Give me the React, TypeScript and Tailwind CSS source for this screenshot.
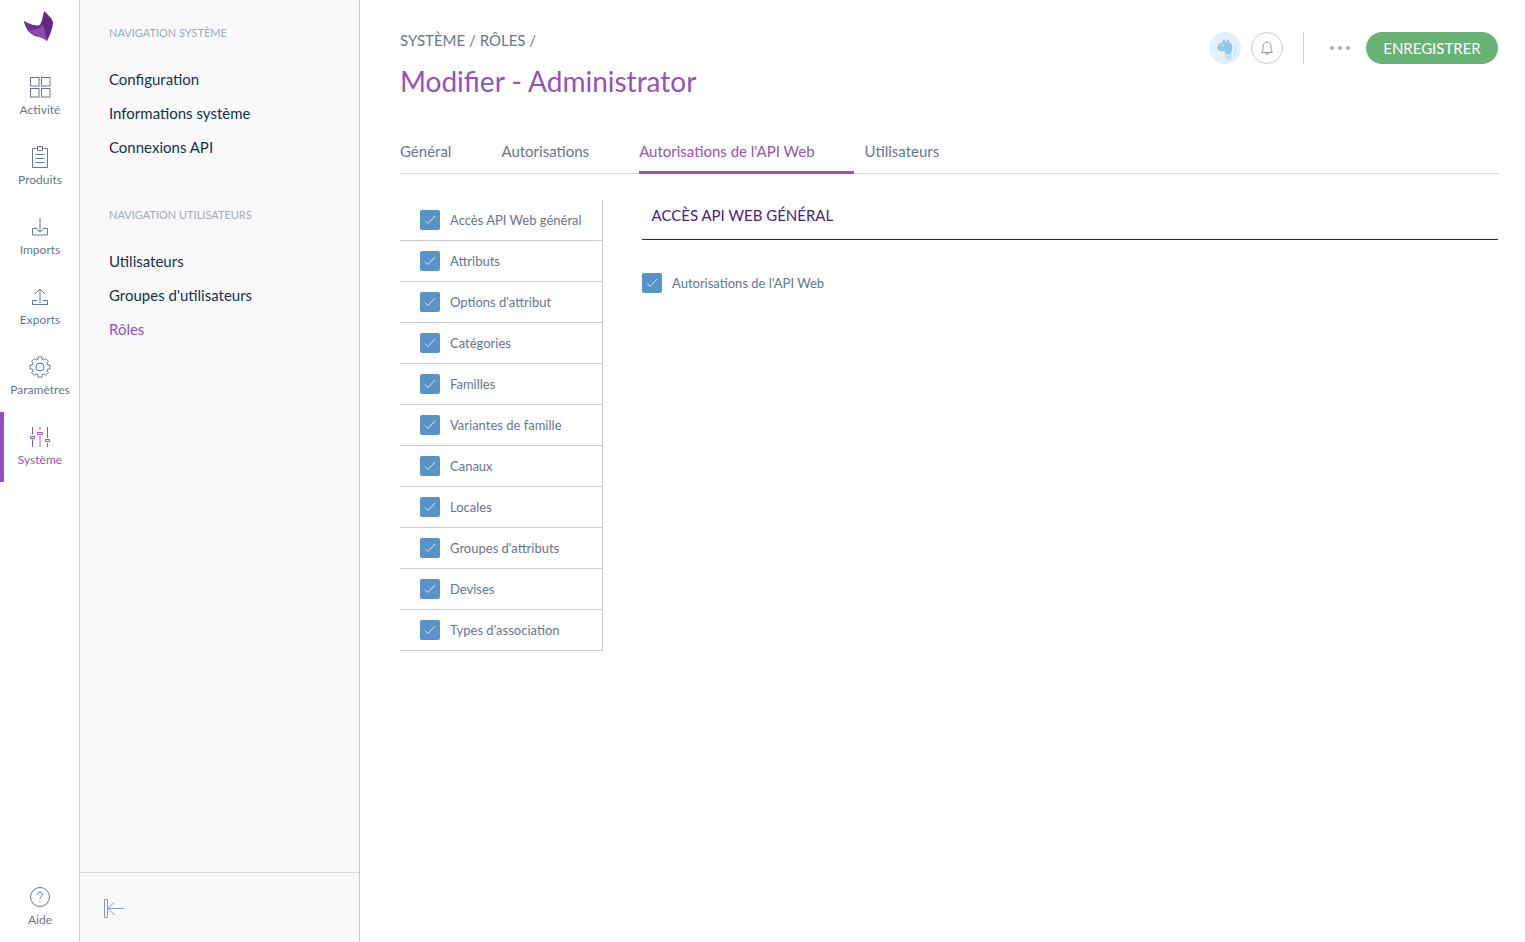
import type { ReactNode } from 'react';

// 8 tooth cog outline for the settings icon
const gearPath = Array.from({ length: 8 }, (_, i) => {
  const pt = (deg: number, r: number) => {
    const a = ((i * 45 + deg) * Math.PI) / 180;
    return `${(14 + r * Math.cos(a)).toFixed(2)} ${(14 + r * Math.sin(a)).toFixed(2)}`;
  };
  return `${i === 0 ? 'M' : 'L'}${pt(-11, 10.2)} L${pt(11, 10.2)} L${pt(15, 8)} L${pt(30, 8)}`;
}).join(' ') + 'Z';

const icons: Record<string, ReactNode> = {
  activity: (
    <>
      <rect x="4.5" y="4.5" width="8.5" height="8.5" />
      <rect x="15.5" y="4.5" width="8.5" height="8.5" />
      <rect x="4.5" y="15.5" width="8.5" height="8.5" />
      <rect x="15.5" y="15.5" width="8.5" height="8.5" />
    </>
  ),
  products: (
    <>
      <path d="M10.5 5.5H6.5V24.5H21.5V5.5H17.5" />
      <path d="M11.5 3.5H16.5V7.5H11.5Z" />
      <path d="M9.5 11.5H18.5M9.5 15.5H18.5M9.5 19.5H18.5" />
    </>
  ),
  imports: (
    <>
      <path d="M14 5V19M9 14.5L14 19L19 14.5" />
      <path d="M10 15.5H6.5V22H21.5V15.5H18" />
    </>
  ),
  exports: (
    <>
      <path d="M14 20V6M9 11L14 6L19 11" />
      <path d="M11 17.5H6.5V21.5H21.5V17.5H17" />
    </>
  ),
  settings: (
    <>
      <circle cx="14" cy="14" r="4" />
      <path d={gearPath} strokeLinejoin="round" />
    </>
  ),
  system: (
    <>
      <path d="M6.5 4V11.5M6.5 16.5V24" />
      <path d="M4.5 13.5H8.5V15.5H4.5Z" />
      <path d="M14 4V7M14 12.5V24" strokeOpacity="0.6" strokeWidth="1.5" />
      <path d="M11.5 9.5H16.5V11.5H11.5Z" />
      <path d="M21.5 4V15M21.5 20V24" />
      <path d="M19.5 16.5H23.5V18.5H19.5Z" />
    </>
  ),
};

function RailItem({ icon, label, active }: { icon: string; label: string; active?: boolean }) {
  return (
    <div
      className={`h-[70px] flex flex-col items-center pt-[11px] border-l-4 pr-[3px] ${
        active ? 'border-[#9452ba] text-[#9452ba]' : 'border-transparent text-[#67768a]'
      }`}
    >
      <svg width="28" height="28" viewBox="0 0 28 28" fill="none" stroke="currentColor" strokeWidth="1">
        {icons[icon]}
      </svg>
      <span className="text-[12px] leading-[16px] mt-[1px]">{label}</span>
    </div>
  );
}

function CheckBox() {
  return (
    <span className="w-5 h-5 rounded-[2px] bg-[#5992c7] flex items-center justify-center shrink-0">
      <svg width="12" height="10" viewBox="0 0 12 10" fill="none" stroke="#dbe8f4" strokeWidth="1">
        <path d="M1 5.5L4 8.5L11 1" />
      </svg>
    </span>
  );
}

const groups = [
  'Accès API Web général',
  'Attributs',
  "Options d'attribut",
  'Catégories',
  'Familles',
  'Variantes de famille',
  'Canaux',
  'Locales',
  "Groupes d'attributs",
  'Devises',
  "Types d'association",
];

const tabs = ['Général', 'Autorisations', "Autorisations de l'API Web", 'Utilisateurs'];

export default function App() {
  return (
    <div className="flex h-[942px] overflow-hidden bg-white text-[#67768a] font-['Lato',sans-serif]">
      {/* Rail */}
      <div className="w-20 shrink-0 border-r border-[#c7cbd4] flex flex-col">
        <div className="h-[62px] flex justify-center pr-px pt-[10px]">
          <svg width="32" height="32" viewBox="0 0 32 32">
            <path d="M1 11C6 14 13 17 17 15C19 11 20 6 21 1C24 4 28 7 30 12C30 18 27 25 24 31C21 28 17 27 12 26C7 24 2 18 1 11Z" fill="#5e2a82" />
            <path d="M6 20C11 20 16 19 20 15C22 20 23 26 24 31C20 28 17 27 12 26C10 25 8 23 6 20Z" fill="#8a4bab" />
            <path d="M1 11C6 14 13 17 17 15C14 18 10 19 6 20C3 17 2 14 1 11Z" fill="#6d3191" />
          </svg>
        </div>
        <RailItem icon="activity" label="Activité" />
        <RailItem icon="products" label="Produits" />
        <RailItem icon="imports" label="Imports" />
        <RailItem icon="exports" label="Exports" />
        <RailItem icon="settings" label="Paramètres" />
        <RailItem icon="system" label="Système" active />
        <div className="mt-auto h-[59px] flex flex-col items-center pl-px">
          <svg width="28" height="28" viewBox="0 0 28 28" fill="none" stroke="#67768a" strokeWidth="1">
            <circle cx="14" cy="14" r="9.5" />
            <path d="M11.5 11.5C11.5 8.5 16.5 8.5 16.5 11.5C16.5 13.5 14 13.5 14 16" />
            <path d="M14 18V19" />
          </svg>
          <span className="text-[12px] leading-[16px] mt-[1px]">Aide</span>
        </div>
      </div>

      {/* Sub navigation */}
      <div className="w-[280px] shrink-0 bg-[#f9f9fb] border-r border-[#c7cbd4] flex flex-col">
        <div className="flex-1 pl-[29px] pt-[26px]">
          <div className="text-[11px] leading-[14px] text-[#a1a9b7] uppercase">Navigation système</div>
          <div className="mt-[22px] text-[15px] leading-[34px] text-[#11324d]">
            <div>Configuration</div>
            <div>Informations système</div>
            <div>Connexions API</div>
          </div>
          <div className="mt-[44px] text-[11px] leading-[14px] text-[#a1a9b7] uppercase">Navigation utilisateurs</div>
          <div className="mt-[22px] text-[15px] leading-[34px] text-[#11324d]">
            <div>Utilisateurs</div>
            <div>Groupes d'utilisateurs</div>
            <div className="text-[#9452ba]">Rôles</div>
          </div>
        </div>
        <div className="h-[70px] border-t border-[#d5d8de] flex items-center pl-[22px]">
          <svg width="24" height="24" viewBox="0 0 24 24" fill="none" stroke="#8e98a8" strokeWidth="1">
            <path d="M2.5 3.5H5.5V21.5H2.5Z" />
            <path d="M22 12.5H6M12.5 6L6 12.5L12.5 19" />
          </svg>
        </div>
      </div>

      {/* Main */}
      <div className="flex-1 min-w-0 pl-10 pr-[27px]">
        <div className="flex justify-between h-[104px]">
          <div className="pt-[30px]">
            <div className="text-[15px] leading-[20px] text-[#67768a] uppercase">Système / Rôles /</div>
            <h1 className="mt-[13px] text-[28px] leading-[36px] text-[#9452ba]">Modifier - Administrator</h1>
          </div>
          <div className="flex items-center h-[32px] mt-[32px]">
            <div className="w-8 h-8 rounded-full bg-[#e0f0fc]">
              <svg width="32" height="32" viewBox="0 0 32 32">
                <circle cx="15" cy="9" r="1.3" fill="#92c5ea" />
                <circle cx="19" cy="9" r="1.3" fill="#92c5ea" />
                <path d="M8 16C9 11 14 9 19 10C23 11 24 14 23 18L22 22H16V19C12 20 9 19 8 16Z" fill="#92c5ea" />
                <path d="M16 22H22.5V28H17Z" fill="#c3e0f6" />
                <circle cx="13.5" cy="13.5" r="1.3" fill="#fff" />
                <circle cx="13.5" cy="13.5" r="0.6" fill="#3f6f96" />
                <path d="M26 13C27 17 27 20 25 24" fill="none" stroke="#b5d6ee" strokeWidth="0.7" />
              </svg>
            </div>
            <div className="ml-[10px] w-8 h-8 rounded-full border border-[#c7cbd4] flex items-center justify-center">
              <svg width="16" height="16" viewBox="0 0 16 16" fill="none" stroke="#8e98a8" strokeWidth="1">
                <path d="M2.5 12.5C4 11 4 9.5 4 7C4 4 6 2 8 2C10 2 12 4 12 7C12 9.5 12 11 13.5 12.5Z" />
                <path d="M6.5 13C6.5 15 9.5 15 9.5 13" />
              </svg>
            </div>
            <div className="ml-[20px] w-px h-8 bg-[#c7cbd4]" />
            <div className="ml-[26px] flex gap-[4px]">
              <span className="w-1 h-1 rounded-full bg-[#a1a9b7]" />
              <span className="w-1 h-1 rounded-full bg-[#a1a9b7]" />
              <span className="w-1 h-1 rounded-full bg-[#a1a9b7]" />
            </div>
            <div className="ml-4 h-8 w-[132px] rounded-full bg-[#67b373] text-white text-[15px] flex items-center justify-center uppercase">
              Enregistrer
            </div>
          </div>
        </div>

        {/* Tabs */}
        <div className="flex h-[70px] border-b border-[#d5d8de] items-stretch gap-[10px]">
          {tabs.map((tab, i) => (
            <div
              key={tab}
              className={`h-[70px] flex items-center text-[15px] pt-[28px] -mb-px border-b-[3px] ${
                i === 2 ? 'border-[#9452ba] text-[#9452ba] pr-[39px] mr-px' : 'border-transparent text-[#67768a] pr-10'
              }`}
            >
              {tab}
            </div>
          ))}
        </div>

        <div className="flex mt-[26px] items-start">
          <div className="w-[203px] border-r border-[#c7cbd4] shrink-0">
            {groups.map((g) => (
              <div key={g} className="h-[41px] flex items-center pl-5 gap-[10px] border-b border-[#c7cbd4] text-[13px]">
                <CheckBox />
                <span className="mt-[2px]">{g}</span>
              </div>
            ))}
          </div>
          <div className="flex-1 ml-[39px]">
            <div className="h-[40px] flex items-center pl-[9.6px] pb-[9px] border-b border-[#11324d] text-[15px] text-[#47227a] uppercase">
              Accès API Web général
            </div>
            <div className="mt-[33px] flex items-center gap-[10px] text-[13px] leading-[16px]">
              <CheckBox />
              <span>Autorisations de l'API Web</span>
            </div>
          </div>
        </div>
      </div>
    </div>
  );
}
